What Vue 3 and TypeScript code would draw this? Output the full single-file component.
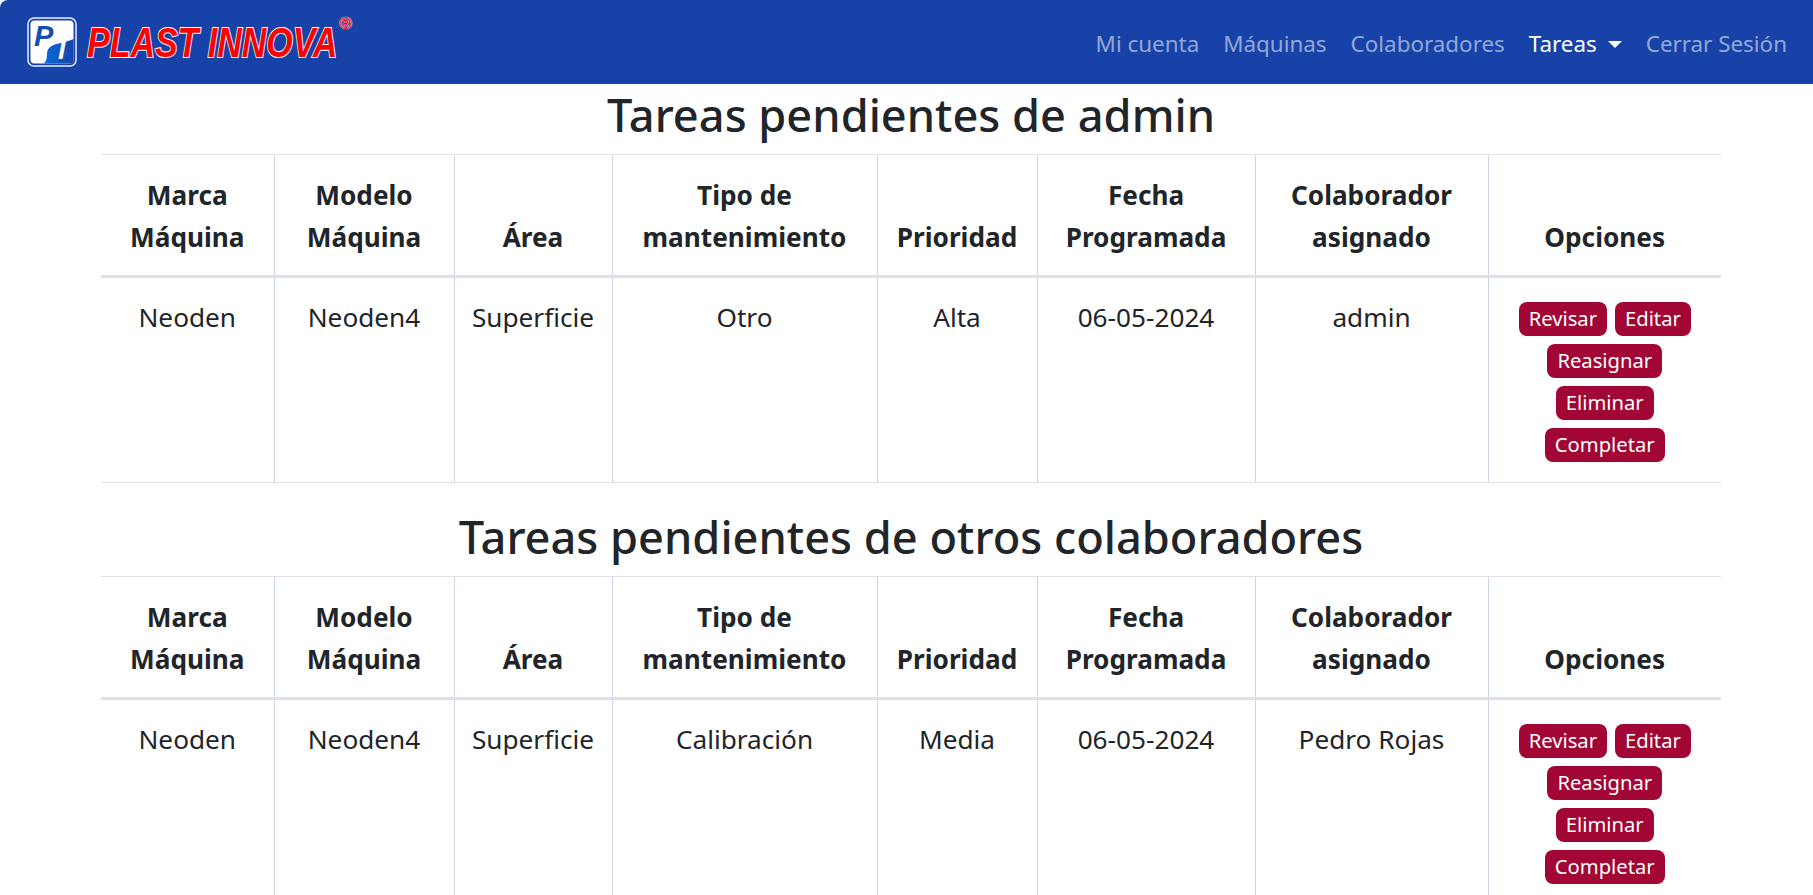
<script setup lang="ts">
defineOptions({
  name: 'TareasPage',
})

interface Tarea {
  marca: string
  modelo: string
  area: string
  tipo: string
  prioridad: string
  fecha: string
  colaborador: string
}

const navItems = [
  { label: 'Mi cuenta', active: false },
  { label: 'Máquinas', active: false },
  { label: 'Colaboradores', active: false },
  { label: 'Tareas', active: true, dropdown: true },
  { label: 'Cerrar Sesión', active: false },
]

const columnWidths = [173, 180, 158, 265, 160, 218, 233, 233]

const headers = [
  'Marca Máquina',
  'Modelo Máquina',
  'Área',
  'Tipo de mantenimiento',
  'Prioridad',
  'Fecha Programada',
  'Colaborador asignado',
  'Opciones',
]

const sections: { title: string; rows: Tarea[] }[] = [
  {
    title: 'Tareas pendientes de admin',
    rows: [
      {
        marca: 'Neoden',
        modelo: 'Neoden4',
        area: 'Superficie',
        tipo: 'Otro',
        prioridad: 'Alta',
        fecha: '06-05-2024',
        colaborador: 'admin',
      },
    ],
  },
  {
    title: 'Tareas pendientes de otros colaboradores',
    rows: [
      {
        marca: 'Neoden',
        modelo: 'Neoden4',
        area: 'Superficie',
        tipo: 'Calibración',
        prioridad: 'Media',
        fecha: '06-05-2024',
        colaborador: 'Pedro Rojas',
      },
    ],
  },
]

const actions = ['Revisar', 'Editar', 'Reasignar', 'Eliminar', 'Completar']
</script>

<template>
  <div class="page">
    <nav class="navbar">
      <a class="brand" href="#">
        <svg class="brand-mark" width="50" height="50" viewBox="0 0 50 50">
          <defs>
            <linearGradient id="mark-blue" x1="0" y1="0" x2="1" y2="0">
              <stop offset="0" stop-color="#0a6be0" />
              <stop offset="1" stop-color="#1742a8" />
            </linearGradient>
          </defs>
          <rect x="1" y="1" width="48" height="48" rx="6" fill="#1742a8" stroke="#e8eefb" stroke-width="1.5" />
          <rect x="3.5" y="3.5" width="43" height="43" rx="4" fill="#fff" />
          <path
            d="M17 46.5C22 41 18 36 22 31C26 26 36 27 46.5 22V42.5Q46.5 46.5 42.5 46.5Z"
            fill="url(#mark-blue)"
          />
          <text class="mark-p" x="7" y="29">P</text>
          <text class="mark-i" x="31" y="42">I</text>
        </svg>
        <span class="brand-name">PLAST INNOVA</span>
        <span class="brand-reg">®</span>
      </a>
      <div class="nav-links">
        <a
          v-for="item in navItems"
          :key="item.label"
          class="nav-link"
          :class="{ active: item.active, dropdown: item.dropdown }"
          href="#"
        >
          {{ item.label }}
        </a>
      </div>
    </nav>

    <main class="container">
      <section v-for="section in sections" :key="section.title" class="section">
        <h2 class="section-title">{{ section.title }}</h2>
        <table class="tasks">
          <colgroup>
            <col v-for="(width, i) in columnWidths" :key="i" :style="{ width: width + 'px' }" />
          </colgroup>
          <thead>
            <tr>
              <th v-for="header in headers" :key="header">{{ header }}</th>
            </tr>
          </thead>
          <tbody>
            <tr v-for="(row, i) in section.rows" :key="i">
              <td>{{ row.marca }}</td>
              <td>{{ row.modelo }}</td>
              <td>{{ row.area }}</td>
              <td>{{ row.tipo }}</td>
              <td>{{ row.prioridad }}</td>
              <td>{{ row.fecha }}</td>
              <td>{{ row.colaborador }}</td>
              <td class="options">
                <a v-for="action in actions" :key="action" class="btn" href="#">{{ action }}</a>
              </td>
            </tr>
          </tbody>
        </table>
      </section>
    </main>
  </div>
</template>

<style scoped>
.page {
  height: 895px;
  overflow: hidden;
  color: #212529;
  background: #fff;
  font-family: 'Noto Sans', 'Open Sans', sans-serif;
}

.navbar {
  display: flex;
  align-items: center;
  justify-content: space-between;
  height: 84px;
  padding: 3px 26px 0 27px;
  border-top-left-radius: 8px;
  background: #1742a8;
  box-sizing: border-box;
}

.brand {
  position: relative;
  display: flex;
  align-items: center;
  width: 323px;
  margin-top: -3px;
  text-decoration: none;
}

.brand-mark {
  flex: none;
}

.mark-p {
  fill: #1450b4;
  font-family: 'Liberation Sans', sans-serif;
  font-size: 29px;
  font-weight: 700;
  font-style: italic;
}

.mark-i {
  fill: #fff;
  font-family: 'Liberation Sans', sans-serif;
  font-size: 27px;
  font-weight: 700;
  font-style: italic;
}

.brand-name {
  flex: none;
  margin-left: 10px;
  color: #f00;
  font-family: 'Liberation Sans', sans-serif;
  font-size: 43px;
  font-weight: 700;
  font-style: italic;
  line-height: 1;
  white-space: nowrap;
  -webkit-text-stroke: 2px #fff;
  paint-order: stroke fill;
  transform: scaleX(0.79);
  transform-origin: left center;
}

.brand-reg {
  position: absolute;
  top: -2px;
  right: -2px;
  color: #f00;
  font-family: 'Liberation Sans', sans-serif;
  font-size: 17px;
  font-weight: 700;
  line-height: 1;
  text-shadow: 0 0 1px #fff, 0 0 1px #fff;
}

.nav-links {
  display: flex;
  align-items: center;
  gap: 24px;
}

.nav-link {
  color: rgb(255 255 255 / 55%);
  font-size: 22.4px;
  text-decoration: none;
}

.nav-link.active {
  color: #fff;
}

.nav-link.dropdown::after {
  display: inline-block;
  margin-left: 11px;
  border-top: 7px solid;
  border-right: 7px solid transparent;
  border-left: 7px solid transparent;
  vertical-align: 4px;
  content: '';
}

.container {
  padding: 0 92px 0 101px;
}

.section {
  margin-bottom: 23px;
}

.section-title {
  height: 70px;
  margin: 0;
  font-size: 45.2px;
  font-weight: 500;
  line-height: 61px;
  text-align: center;
}

.tasks {
  width: 1620px;
  border-collapse: collapse;
  table-layout: fixed;
  font-size: 26.2px;
  line-height: 42px;
  text-align: center;
}

.tasks th,
.tasks td {
  border-top: 1px solid #dee2e6;
  border-bottom: 1px solid #dee2e6;
  border-left: 1px solid #cbd5ea;
}

.tasks th:first-child,
.tasks td:first-child {
  border-left: 0;
}

.tasks th {
  padding: 19px 8px 17px;
  border-bottom: 3px solid #dee2e6;
  font-weight: 700;
  vertical-align: bottom;
}

.tasks td {
  padding: 18px 8px;
  vertical-align: top;
}

.tasks .options {
  padding: 24px 8px 12px;
  font-size: 0;
  line-height: 42px;
}

.btn {
  display: inline-block;
  height: 34px;
  margin: 0 4px;
  padding: 0 10px;
  border-radius: 8px;
  color: #fff;
  background: #a20635;
  font-size: 20.2px;
  line-height: 33px;
  text-decoration: none;
  vertical-align: top;
}
</style>
